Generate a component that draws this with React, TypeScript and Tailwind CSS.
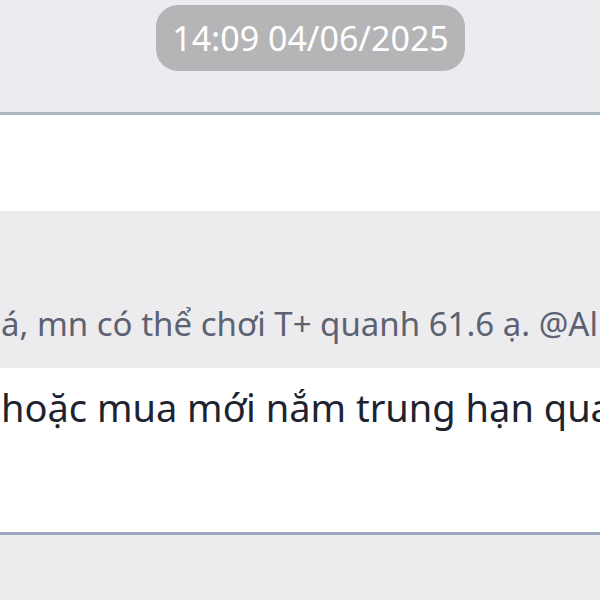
import React from 'react';

export default function App() {
  return (
    <div className="w-[600px] h-[600px] overflow-hidden bg-white flex flex-col font-['Noto_Sans','Open_Sans',sans-serif]">
      {/* Date separator */}
      <div className="h-[112px] bg-[#ececf0] pl-[156px] pt-[5px] shrink-0">
        <div className="w-[309px] h-[66px] rounded-[22px] bg-[#b5b5b7] flex items-center justify-center">
          <span className="text-[34px] text-white leading-none">14:09 04/06/2025</span>
        </div>
      </div>
      <div className="h-[3px] bg-[#aab7bf] shrink-0"></div>

      {/* Message body */}
      <div className="h-[96px] bg-white shrink-0"></div>

      {/* Quoted reply */}
      <div className="h-[157px] bg-[#ececef] shrink-0 flex items-end pb-[28px] overflow-hidden">
        <p className="whitespace-nowrap text-[33px] text-[#5c6272] pl-[1px] leading-none">
          á, mn có thể chơi T+ quanh 61.6 ạ. @Al
        </p>
      </div>

      <div className="h-[164px] bg-white shrink-0 pt-[19px] overflow-hidden">
        <p className="whitespace-nowrap text-[38px] text-[#1e2330] pl-[1px] leading-[40px]">
          hoặc mua mới nắm trung hạn qua
        </p>
      </div>
      <div className="h-[3px] bg-[#9ca6bd] shrink-0"></div>
      <div className="flex-1 bg-[#ececef]"></div>
    </div>
  );
}
